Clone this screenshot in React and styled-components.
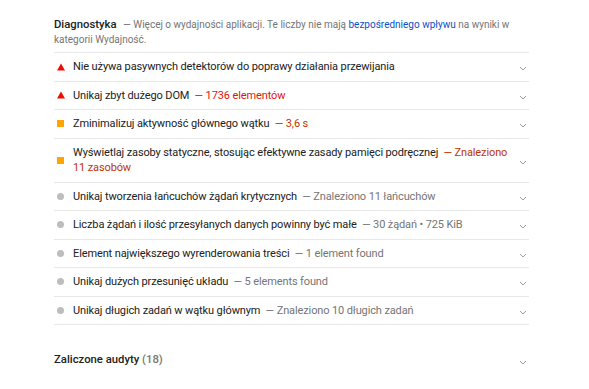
import React from "react";
import styled, { createGlobalStyle } from "styled-components";

const audits = [
	{ kind: "fail", title: "Nie używa pasywnych detektorów do poprawy działania przewijania" },
	{ kind: "fail", title: "Unikaj zbyt dużego DOM", value: "1736 elementów" },
	{ kind: "average", title: "Zminimalizuj aktywność głównego wątku", value: "3,6 s" },
	{
		kind: "average",
		title: "Wyświetlaj zasoby statyczne, stosując efektywne zasady pamięci podręcznej",
		value: "Znaleziono 11 zasobów",
	},
	{ kind: "info", title: "Unikaj tworzenia łańcuchów żądań krytycznych", value: "Znaleziono 11 łańcuchów" },
	{
		kind: "info",
		title: "Liczba żądań i ilość przesyłanych danych powinny być małe",
		value: "30 żądań • 725 KiB",
	},
	{ kind: "info", title: "Element największego wyrenderowania treści", value: "1 element found" },
	{ kind: "info", title: "Unikaj dużych przesunięć układu", value: "5 elements found" },
	{ kind: "info", title: "Unikaj długich zadań w wątku głównym", value: "Znaleziono 10 długich zadań" },
];

const valueColors = {
	fail: "#e3120b",
	average: "#c33300",
	info: "#757575",
};

const Chevron = () => (
	<svg width="8" height="5" viewBox="0 0 8 5">
		<path d="M1 1l3 3 3-3" fill="none" stroke="#9e9e9e" strokeWidth="1" />
	</svg>
);

const Icon = ({ kind }) => {
	if (kind === "fail") {
		return (
			<svg width="8" height="8" viewBox="0 0 8 8">
				<path d="M4 0.5L8 7.5H0z" fill="#eb0f00" />
			</svg>
		);
	}
	if (kind === "average") {
		return <AverageMark />;
	}
	return <InfoMark />;
};

const App = () => {
	return (
		<>
			<GlobalStyle />
			<StyledPage>
				<StyledHeader>
					<span className="title">Diagnostyka</span>
					<span className="desc">
						{" "}
						— Więcej o wydajności aplikacji. Te liczby nie mają{" "}
						<a href="#">bezpośredniego wpływu</a> na wyniki w kategorii Wydajność.
					</span>
				</StyledHeader>
				<StyledList>
					{audits.map((audit, index) => (
						<StyledRow key={index}>
							<StyledIconCell>
								<Icon kind={audit.kind} />
							</StyledIconCell>
							<StyledTitle>
								{audit.title}
								{audit.value && (
									<StyledValue $color={valueColors[audit.kind]}>
										{"  "}— {audit.value}
									</StyledValue>
								)}
							</StyledTitle>
							<StyledChevronCell>
								<Chevron />
							</StyledChevronCell>
						</StyledRow>
					))}
				</StyledList>
				<StyledPassed>
					<span>
						Zaliczone audyty <em>(18)</em>
					</span>
					<StyledChevronCell>
						<Chevron />
					</StyledChevronCell>
				</StyledPassed>
			</StyledPage>
		</>
	);
};

const GlobalStyle = createGlobalStyle`
	body {
		margin: 0;
		background: #fff;
		font-family: Roboto, "Noto Sans", sans-serif;
		color: #212121;
	}
`;

const StyledPage = styled.div`
	width: 475px;
	padding: 17px 0 0 54px;
`;

const StyledHeader = styled.div`
	font-size: 10px;
	line-height: 15px;
	padding-bottom: 5px;
	border-bottom: 1px solid #e8e8e8;

	.title {
		font-size: 11.3px;
		line-height: 15px;
		font-weight: 500;
		color: #212121;
		margin-right: 4px;
	}

	.desc {
		color: #757575;
	}

	a {
		color: #0c50c7;
		text-decoration: none;
	}
`;

const StyledList = styled.div`
	display: flex;
	flex-direction: column;
`;

const StyledRow = styled.div`
	display: flex;
	align-items: center;
	padding: 6px 0;
	border-bottom: 1px solid #e8e8e8;
	font-size: 11px;
	letter-spacing: -0.12px;
	line-height: 15.5px;
`;

const StyledIconCell = styled.div`
	width: 19px;
	flex-shrink: 0;
	display: flex;
	align-items: center;
	padding-left: 3px;
	box-sizing: border-box;
`;

const AverageMark = styled.span`
	display: block;
	width: 7px;
	height: 7px;
	background: #ffa400;
`;

const InfoMark = styled.span`
	display: block;
	width: 7px;
	height: 7px;
	border-radius: 50%;
	background: #bdbdbd;
`;

const StyledTitle = styled.div`
	flex: 1;
	color: #212121;
	white-space: pre-wrap;
	padding-right: 4px;
`;

const StyledValue = styled.span`
	color: ${(props) => props.$color};
`;

const StyledChevronCell = styled.div`
	width: 12px;
	display: flex;
	justify-content: center;
	flex-shrink: 0;
	padding-top: 4px;
`;

const StyledPassed = styled.div`
	display: flex;
	justify-content: space-between;
	align-items: center;
	margin-top: 27px;
	font-size: 11.3px;
	font-weight: 500;
	line-height: 16px;

	em {
		font-style: normal;
		color: #757575;
	}
`;

export default App;
